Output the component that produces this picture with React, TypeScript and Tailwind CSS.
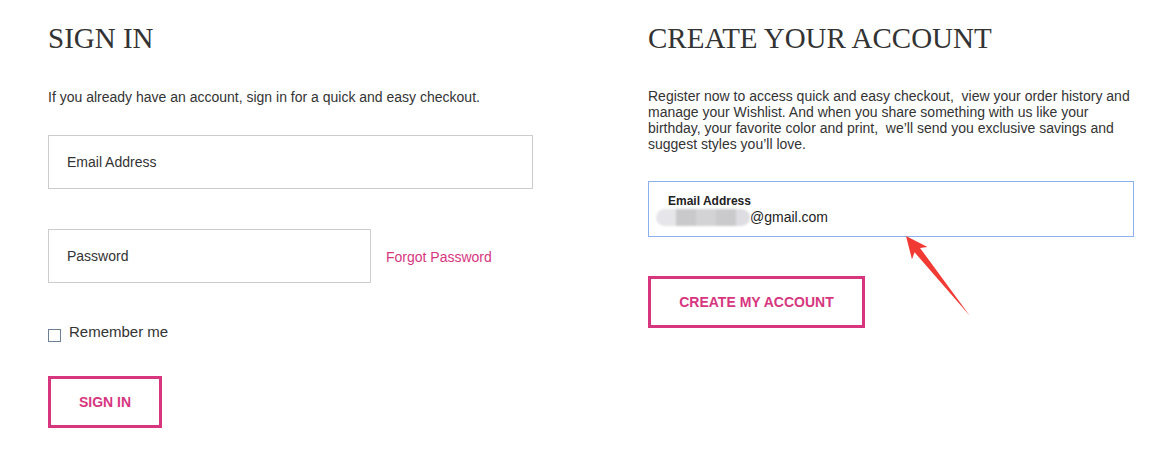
import React from 'react';

const pink = 'text-[#d7367f]';

export default function App() {
  return (
    <div className="relative w-[1153px] h-[471px] bg-white text-[#333] font-['Liberation_Sans',Arial,sans-serif] overflow-hidden">
      <div className="flex pl-[48px] pt-[20px]">
        {/* sign in */}
        <div className="w-[600px] shrink-0">
          <h1 className="text-[29px] leading-[36px] font-['Liberation_Serif','Times_New_Roman',serif] font-normal text-[#333]">
            SIGN IN
          </h1>
          <p className="mt-[33px] text-[14px] leading-[16px]">
            If you already have an account, sign in for a quick and easy checkout.
          </p>
          <div className="mt-[30px] w-[485px] h-[54px] border border-[#cccccc] flex items-center pl-[18px] text-[14px]">
            Email Address
          </div>
          <div className="mt-[40px] flex items-center">
            <div className="w-[323px] h-[54px] border border-[#cccccc] flex items-center pl-[18px] text-[14px]">
              Password
            </div>
            <a className={`ml-[15px] mt-[2px] text-[14px] ${pink}`}>Forgot Password</a>
          </div>
          <label className="mt-[40px] flex items-start">
            <span className="mt-[6px] w-[13px] h-[13px] border border-[#6b7f96] bg-white" />
            <span className="ml-[8px] text-[15px] leading-[18px]">Remember me</span>
          </label>
          <button className={`mt-[34px] w-[114px] h-[52px] border-[3px] border-[#d7367f] bg-white text-[14px] font-bold ${pink}`}>
            SIGN IN
          </button>
        </div>

        {/* create account */}
        <div className="w-[486px] shrink-0">
          <h1 className="text-[29px] leading-[36px] font-['Liberation_Serif','Times_New_Roman',serif] font-normal text-[#333]">
            CREATE YOUR ACCOUNT
          </h1>
          <p className="mt-[32px] text-[14px] leading-[16px] pr-[2px]">
            Register now to access quick and easy checkout,&nbsp; view your order history and manage your Wishlist. And when you share something with us like your birthday, your favorite color and print,&nbsp; we’ll send you exclusive savings and suggest styles you’ll love.
          </p>
          <div className="mt-[29px] w-[486px] h-[56px] border border-[#8cb0ee] pl-[19px] pt-[12px]">
            <div className="text-[12px] leading-[14px] font-bold text-[#222]">Email Address</div>
            <div className="flex items-center -ml-[12px] mt-[1px]">
              <div className="flex h-[17px] blur-[1px] rounded-full overflow-hidden">
                <span className="w-[20px] bg-[#e6e6ea]" />
                <span className="w-[20px] bg-[#c9c9cb]" />
                <span className="w-[20px] bg-[#d3d3d6]" />
                <span className="w-[20px] bg-[#cacacc]" />
                <span className="w-[14px] bg-[#dedee2]" />
              </div>
              <span className="text-[14px] leading-[17px] text-[#222]">@gmail.com</span>
            </div>
          </div>
          <button className={`mt-[39px] w-[217px] h-[52px] border-[3px] border-[#d7367f] bg-white text-[14px] font-bold ${pink}`}>
            CREATE MY ACCOUNT
          </button>
        </div>
      </div>

      {/* annotation arrow */}
      <svg className="absolute left-[895px] top-[230px]" width="85" height="95" viewBox="0 0 85 95">
        <polygon
          points="11,6 32.5,17 25,17.9 75,86 19.5,22.2 17,29.5"
          fill="#f23a35"
        />
      </svg>
    </div>
  );
}
